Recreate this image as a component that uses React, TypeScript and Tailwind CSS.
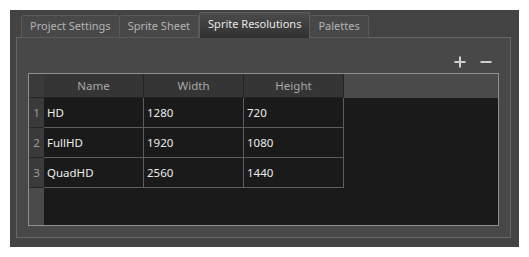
import React from 'react';

const rows = [
  { name: 'HD', width: '1280', height: '720' },
  { name: 'FullHD', width: '1920', height: '1080' },
  { name: 'QuadHD', width: '2560', height: '1440' },
];

const tabs = ['Project Settings', 'Sprite Sheet', 'Sprite Resolutions', 'Palettes'];

export default function App() {
  return (
    <div className="w-[529px] h-[257px] bg-white p-[10px] font-['Noto_Sans',sans-serif] text-[11.5px]">
      <div className="w-[509px] h-[237px] bg-[#434343] flex flex-col pl-[6px] pr-[8px] pb-[9px]">
        {/* tab bar */}
        <div className="flex items-end h-[28px] pl-[5px] relative z-10 -mb-px text-[11px]">
          {tabs.map((t) => {
            const active = t === 'Sprite Resolutions';
            return active ? (
              <div
                key={t}
                className="h-[26px] px-[8px] flex items-center bg-gradient-to-b from-[#4c4c4c] to-[#303030] border border-b-0 border-[#5c5c5c] rounded-t-[2px] text-[#e6e6e6] pb-[3px]"
              >
                {t}
              </div>
            ) : (
              <div
                key={t}
                className="h-[23px] px-[8px] flex items-center bg-[#484848] border border-[#5a5a5a] border-l-0 first:border-l rounded-t-[2px] text-[#b4b4b4] last:border-l-0"
              >
                {t}
              </div>
            );
          })}
        </div>
        {/* pane */}
        <div className="flex-1 border border-[#666666] bg-[#484848] flex flex-col px-[11px] pb-[11px]">
          <div className="h-[35px] flex items-center justify-end gap-[14px] pr-[7px] pt-[12px]">
            <svg width="12" height="12" viewBox="0 0 12 12">
              <path d="M6 0.5v11M0.5 6h11" stroke="#cfcfcf" strokeWidth="2" />
            </svg>
            <svg width="12" height="12" viewBox="0 0 12 12">
              <path d="M0.5 6h11" stroke="#cfcfcf" strokeWidth="2" />
            </svg>
          </div>
          <div className="flex-1 border border-[#8b8f97] flex bg-[#1a1a1a]">
            {/* row header column */}
            <div className="w-[15px] flex flex-col bg-[#4a4a4a]">
              <div className="h-[24px] bg-[#3a3a3a] border-b border-[#262626]" />
              {rows.map((_, i) => (
                <div
                  key={i}
                  className="h-[30px] bg-[#3a3a3a] border-b border-[#262626] flex items-center justify-center text-[#9a9a9a]"
                >
                  {i + 1}
                </div>
              ))}
            </div>
            <div className="flex-1 flex flex-col">
              <div className="h-[24px] flex bg-[#4a4a4a]">
                {['Name', 'Width', 'Height'].map((h) => (
                  <div
                    key={h}
                    className="w-[100px] h-[24px] bg-[#353535] border-r border-b border-[#232323] flex items-center justify-center text-[#a8a8a8]"
                  >
                    {h}
                  </div>
                ))}
              </div>
              {rows.map((r) => (
                <div key={r.name} className="flex h-[30px]">
                  {[r.name, r.width, r.height].map((v, j) => (
                    <div
                      key={j}
                      className="w-[100px] h-[30px] border-r border-b border-[#5e5e5e] flex items-center pl-[3px] text-[#ececec]"
                    >
                      {v}
                    </div>
                  ))}
                </div>
              ))}
            </div>
          </div>
        </div>
      </div>
    </div>
  );
}
